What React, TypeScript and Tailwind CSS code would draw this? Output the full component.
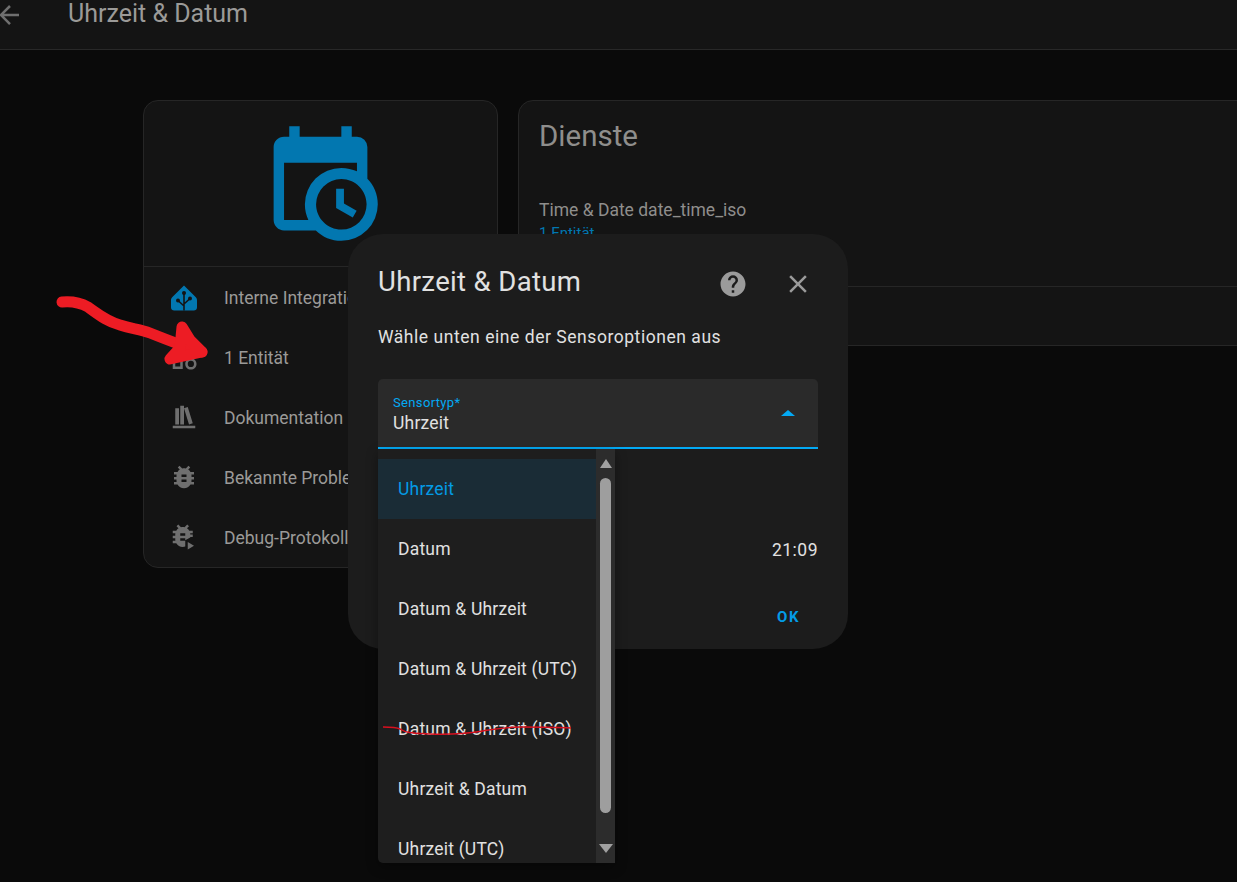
import React from "react";

const P = {
  back: "M20,11V13H8L13.5,18.5L12.08,19.92L4.16,12L12.08,4.08L13.5,5.5L8,11H20Z",
  cal: "M15,13H16.5V15.82L18.94,17.23L18.19,18.53L15,16.69V13M19,8H5V19H9.67C9.24,18.09 9,17.07 9,16A7,7 0 0,1 16,9C17.07,9 18.09,9.24 19,9.67V8M5,21C3.89,21 3,20.1 3,19V5C3,3.89 3.89,3 5,3H6V1H8V3H16V1H18V3H19A2,2 0 0,1 21,5V11.1C22.24,12.36 23,14.09 23,16A7,7 0 0,1 16,23C14.09,23 12.36,22.24 11.1,21H5M16,11.15A4.85,4.85 0 0,0 11.15,16C11.15,18.68 13.32,20.85 16,20.85A4.85,4.85 0 0,0 20.85,16C20.85,13.32 18.68,11.15 16,11.15Z",
  shape: "M11,13.5V21.5H3V13.5H11M9,15.5H5V19.5H9V15.5M12,2L17.5,11H6.5L12,2M12,5.86L10.08,9H13.91L12,5.86M17.5,13C20,13 22,15 22,17.5C22,20 20,22 17.5,22C15,22 13,20 13,17.5C13,15 15,13 17.5,13M17.5,15A2.5,2.5 0 0,0 15,17.5A2.5,2.5 0 0,0 17.5,20A2.5,2.5 0 0,0 20,17.5A2.5,2.5 0 0,0 17.5,15Z",
  book: "M9 3V18H12V3H9M12 5L16 18L19 17L15 4L12 5M5 5V18H8V5H5M3 19V21H21V19H3Z",
  bug: "M14,12H10V10H14M14,16H10V14H14M20,8H17.19C16.74,7.22 16.12,6.55 15.37,6.04L17,4.41L15.59,3L13.42,5.17C12.96,5.06 12.5,5 12,5C11.5,5 11.04,5.06 10.59,5.17L8.41,3L7,4.41L8.62,6.04C7.88,6.55 7.26,7.22 6.81,8H4V10H6.09C6.04,10.33 6,10.66 6,11V12H4V14H6V15C6,15.34 6.04,15.67 6.09,16H4V18H6.81C7.85,19.79 9.78,21 12,21C14.22,21 16.15,19.79 17.19,18H20V16H17.91C17.96,15.67 18,15.34 18,15V14H20V12H18V11C18,10.66 17.96,10.33 17.91,10H20V8Z",
  bugPlay: "M13,11H9V9H13M13,15H9V13H13M19,7H16.19C15.74,6.22 15.12,5.55 14.37,5.04L16,3.41L14.59,2L12.42,4.17C11.96,4.06 11.5,4 11,4C10.5,4 10.04,4.06 9.59,4.17L7.41,2L6,3.41L7.62,5.04C6.88,5.55 6.26,6.22 5.81,7H3V9H5.09C5.04,9.33 5,9.66 5,10V11H3V13H5V14C5,14.34 5.04,14.67 5.09,15H3V17H5.81C6.85,18.79 8.78,20 11,20C11.7,20 12.4,19.87 13,19.65V14.5L17,12.4V12H19V10H17V10C17,9.66 16.96,9.33 16.91,9H19V7ZM15,16V22L20,19L15,16Z",
  help: "M15.07,11.25L14.17,12.17C13.45,12.89 13,13.5 13,15H11V14.5C11,13.39 11.45,12.39 12.17,11.67L13.41,10.41C13.78,10.05 14,9.55 14,9C14,7.89 13.1,7 12,7A2,2 0 0,0 10,9H8A4,4 0 0,1 12,5A4,4 0 0,1 16,9C16,9.88 15.64,10.67 15.07,11.25M13,19H11V17H13M12,2A10,10 0 0,0 2,12A10,10 0 0,0 12,22A10,10 0 0,0 22,12C22,6.47 17.5,2 12,2Z",
  close: "M19,6.41L17.59,5L12,10.59L6.41,5L5,6.41L10.59,12L5,17.59L6.41,19L12,13.41L17.59,19L19,17.59L13.41,12L19,6.41Z",
};

function Icon({ d, className }: { d: string; className: string }) {
  return (
    <svg viewBox="0 0 24 24" fill="currentColor" fillRule="evenodd" className={className}>
      <path d={d} />
    </svg>
  );
}

function HaLogo() {
  return (
    <svg viewBox="0 0 26 26" className="mt-[1px] h-[26px] w-[26px] shrink-0">
      <path
        d="M13 0.5 L24.6 12.1 C25.5 13 26 14 26 15.2 V22.5 C26 24.4 24.6 25.5 22.8 25.5 H3.2 C1.4 25.5 0 24.4 0 22.5 V15.2 C0 14 0.5 13 1.4 12.1 Z"
        fill="#0277b0"
      />
      <g stroke="#141414" strokeWidth="1.6" fill="none">
        <path d="M13 8 V25.5 M13 21 L7.5 16 M13 19 L18.5 14" />
      </g>
      <g fill="#141414">
        <circle cx="13" cy="8" r="2" />
        <circle cx="7" cy="15.5" r="2" />
        <circle cx="19" cy="13.5" r="2" />
      </g>
    </svg>
  );
}

const rows = [
  { label: "1 Entität", d: P.shape },
  { label: "Dokumentation", d: P.book },
  { label: "Bekannte Probleme", d: P.bug },
  { label: "Debug-Protokoll", d: P.bugPlay },
];

const options = [
  "Datum",
  "Datum & Uhrzeit",
  "Datum & Uhrzeit (UTC)",
  "Datum & Uhrzeit (ISO)",
  "Uhrzeit & Datum",
  "Uhrzeit (UTC)",
];

export default function App() {
  return (
    <div className="relative h-[882px] w-[1237px] overflow-hidden bg-[#0a0a0a] [font-family:Roboto,sans-serif]">
      <header className="flex h-[50px] items-start border-b border-[#282828] bg-[#141414]">
        <Icon d={P.back} className="ml-[-6px] h-[30px] w-[30px] text-[#6f6f6f]" />
        <h1 className="ml-[44px] text-[25px] leading-[27px] text-[#9b9a98]">Uhrzeit &amp; Datum</h1>
      </header>

      <main className="flex items-start gap-[20px] pl-[143px] pt-[50px]">
        <section className="w-[355px] shrink-0 rounded-[15px] border border-[#262626] bg-[#141414]">
          <div className="flex h-[166px] items-start justify-center border-b border-[#262626] pt-[20px]">
            <Icon d={P.cal} className="h-[125px] w-[125px] text-[#0277b0]" />
          </div>
          <div className="flex h-[60px] items-center pl-[27px]">
            <HaLogo />
            <span className="ml-[27px] pt-[2px] text-[17.5px] text-[#9b9a98]">Interne Integration</span>
          </div>
          {rows.map((r) => (
            <div key={r.label} className="flex h-[60px] items-center pl-[25px]">
              <Icon d={r.d} className="h-[30px] w-[30px] shrink-0 text-[#6f6f6f]" />
              <span className="ml-[25px] pt-[2px] text-[17.5px] text-[#9b9a98]">{r.label}</span>
            </div>
          ))}
        </section>

        <section className="h-[246px] w-[760px] shrink-0 rounded-l-[15px] border border-[#262626] bg-[#141414]">
          <div className="h-[186px] border-b border-[#262626] pl-[20px] pt-[16px]">
            <h2 className="text-[29.5px] leading-[38px] text-[#8f8e8c]">Dienste</h2>
            <p className="mt-[42px] text-[17.5px] leading-[26px] text-[#8f8e8c]">Time &amp; Date date_time_iso</p>
            <p className="text-[15px] leading-[20px] text-[#0277b0]">1 Entität</p>
          </div>
        </section>
      </main>

      <div className="absolute left-[348px] top-[234px] h-[415px] w-[500px] rounded-[35px] bg-[#1c1c1c] px-[30px]">
        <div className="flex items-center pt-[27px]">
          <h3 className="flex-1 pt-[1px] text-[27.5px] leading-[39px] tracking-[0.35px] text-[#e1e1e1]">Uhrzeit &amp; Datum</h3>
          <Icon d={P.help} className="mr-[35px] mt-[5px] h-[30px] w-[30px] text-[#9b9b9b]" />
          <Icon d={P.close} className="mr-[5px] mt-[5px] h-[30px] w-[30px] text-[#9b9b9b]" />
        </div>
        <p className="mt-[23px] text-[17.5px] leading-[26px] tracking-[0.547px] text-[#e1e1e1]">Wähle unten eine der Sensoroptionen aus</p>
        <div className="mt-[29px] flex h-[70px] items-center justify-between rounded-t-[5px] border-b-2 border-[#03a9f4] bg-[#2a2a2a] pl-[15px] pr-[23px]">
          <div className="pt-[4px]">
            <div className="text-[13px] leading-[14px] tracking-[0.35px] text-[#03a9f4]">Sensortyp*</div>
            <div className="pt-[1px] text-[17.5px] leading-[24px] tracking-[0.2px] text-[#e1e1e1]">Uhrzeit</div>
          </div>
          <div className="h-0 w-0 border-x-[7px] border-b-[6px] border-x-transparent border-b-[#03a9f4]" />
        </div>
        <div className="mt-[88px] text-right text-[17.5px] leading-[26px] tracking-[0.5px] text-[#e1e1e1]">21:09</div>
        <div className="mt-[44px] pr-[18px] text-right text-[15px] font-bold leading-[20px] tracking-[1.5px] text-[#039be5]">OK</div>
      </div>

      <div className="absolute left-[378px] top-[449px] flex h-[414px] w-[237px] overflow-hidden rounded-bl-[5px] shadow-[0_4px_12px_rgba(0,0,0,0.35)]">
        <ul className="flex-1 bg-[#1e1e1e] pt-[10px]">
          <li className="flex h-[60px] items-center bg-[#1a2c36] pl-[20px] text-[17.5px] tracking-[0.2px] text-[#039be5]">Uhrzeit</li>
          {options.map((o) => (
            <li key={o} className="flex h-[60px] items-center pl-[20px] text-[17.5px] tracking-[0.2px] text-[#e1e1e1]">{o}</li>
          ))}
        </ul>
        <div className="flex w-[19px] shrink-0 flex-col items-center bg-[#2c2c2c] pt-[10px]">
          <div className="h-0 w-0 border-x-[6px] border-b-[9px] border-x-transparent border-b-[#a0a0a0]" />
          <div className="mt-[10px] h-[335px] w-[11px] rounded-full bg-[#9e9e9e]" />
          <div className="mt-[31px] h-0 w-0 border-x-[7px] border-t-[9px] border-x-transparent border-t-[#a0a0a0]" />
        </div>
      </div>

      <svg className="pointer-events-none absolute left-0 top-0 h-[882px] w-[1237px]" viewBox="0 0 1237 882" fill="none">
        <path
          d="M62 302 C72 301 79 302 88 307 C98 314 106 321 120 325 C132 329 140 329 150 333 C165 339 185 347 202 352"
          stroke="#ed1c24"
          strokeWidth="11"
          strokeLinecap="round"
        />
        <path
          d="M182 327 L190 340 L202 352 L170 359 L180 348 Z"
          fill="#ed1c24"
          stroke="#ed1c24"
          strokeWidth="11"
          strokeLinecap="round"
          strokeLinejoin="round"
        />
        <path
          d="M383 727 C390 727 396 727 400 729 C406 733 412 733 430 734 C450 735 470 733 483 731 C495 729 505 727 520 727 C540 727 555 727 571 728"
          stroke="#d8101f"
          strokeWidth="1.5"
        />
      </svg>
    </div>
  );
}
